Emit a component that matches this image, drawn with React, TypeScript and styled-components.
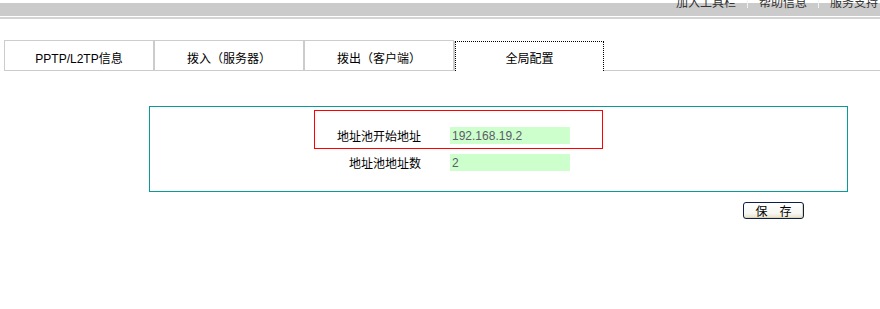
import React from "react";
import styled, { createGlobalStyle } from "styled-components";

const GlobalStyle = createGlobalStyle`
  html, body {
    margin: 0;
    padding: 0;
    background: #ffffff;
  }
  body {
    font-family: "Liberation Sans", "Noto Sans CJK SC", sans-serif;
    font-size: 12px;
    color: #000;
  }
`;

const TopBar = styled.div`
  height: 19px;
  display: flex;
  justify-content: flex-end;
  align-items: flex-start;
  overflow: hidden;
  background: linear-gradient(
    to bottom,
    #ffffff 0 3px,
    #cbcbcb 3px 16px,
    #ffffff 16px 17px,
    #d3d3d3 17px 19px
  );
`;

const TopLink = styled.span<{ $first?: boolean; $last?: boolean }>`
  margin-top: -4px;
  line-height: 12px;
  font-family: "Noto Sans CJK SC", sans-serif;
  font-size: 12px;
  color: #333;
  padding: 0 ${(p) => (p.$last ? "2px" : "11px")} 0 ${(p) => (p.$first ? "11px" : "11px")};
  border-left: 1px solid ${(p) => (p.$first ? "transparent" : "#eef4f4")};
`;

const TabBar = styled.div`
  display: flex;
  height: 31px;
  margin: 21px 0 0 4px;
`;

const Tab = styled.div<{ $active?: boolean }>`
  box-sizing: border-box;
  display: flex;
  align-items: center;
  justify-content: center;
  padding-top: 3px;
  font-size: 12px;
  color: #000;
  white-space: nowrap;
  width: ${(p) => (p.$active ? "149px" : "150px")};
  height: ${(p) => (p.$active ? "30px" : "31px")};
  margin-left: ${(p) => (p.$active ? "1px" : "0")};
  margin-top: ${(p) => (p.$active ? "1px" : "0")};
  border: ${(p) => (p.$active ? "1px dotted #000" : "1px solid #cccccc")};
  border-bottom: ${(p) => (p.$active ? "none" : "1px solid #cccccc")};
  box-shadow: ${(p) => (p.$active ? "-1px 0 0 #cccccc" : "none")};
  padding-bottom: ${(p) => (p.$active ? "1px" : "0")};
`;

const TabFiller = styled.div`
  flex: 1;
  border-bottom: 1px solid #cccccc;
`;

const Panel = styled.section`
  margin: 35px 32px 0 149px;
  border: 1px solid #0b9a9a;
  padding: 3px 0 19px 164px;
`;

const RowFrame = styled.div<{ $highlight?: boolean }>`
  box-sizing: border-box;
  width: 289px;
  border: 1px solid ${(p) => (p.$highlight ? "#ff0000" : "transparent")};
  padding: ${(p) => (p.$highlight ? "16px 0 4px" : "0")};
  margin-top: ${(p) => (p.$highlight ? "0" : "4px")};
`;

const FieldRow = styled.div`
  display: grid;
  grid-template-columns: 106px 120px;
  column-gap: 29px;
  align-items: center;
`;

const FieldLabel = styled.label`
  text-align: right;
  font-family: "Noto Sans CJK SC", sans-serif;
  font-size: 12px;
  line-height: 17px;
  color: #000;
  white-space: nowrap;
`;

const FieldInput = styled.input`
  box-sizing: border-box;
  width: 120px;
  height: 17px;
  border: none;
  outline: none;
  margin: 0;
  padding: 1px 0 0 2px;
  background: #ccffcc;
  font-family: "Liberation Sans", sans-serif;
  font-size: 12px;
  color: #5c5c6a;
`;

const Actions = styled.div`
  display: flex;
  justify-content: flex-end;
  margin: 10px 76px 0 0;
`;

const SaveButton = styled.button`
  box-sizing: border-box;
  width: 61px;
  height: 17px;
  padding: 0;
  margin: 0;
  border: 1px solid #0d1d4d;
  border-radius: 3px;
  background: linear-gradient(to bottom, #ffffff 0%, #f6f6f2 70%, #e6e2cc 100%);
  box-shadow: inset -1px -1px 0 #e2d8b0;
  font-family: "Noto Sans CJK SC", sans-serif;
  font-size: 12px;
  line-height: 15px;
  color: #000;
  cursor: pointer;
`;

const tabs = ["PPTP/L2TP信息", "拨入（服务器）", "拨出（客户端）", "全局配置"];

export default function App() {
  return (
    <>
      <GlobalStyle />
      <TopBar>
        <TopLink $first>加入工具栏</TopLink>
        <TopLink>帮助信息</TopLink>
        <TopLink $last>服务支持</TopLink>
      </TopBar>
      <TabBar>
        {tabs.map((t, i) => (
          <Tab key={t} $active={i === 3}>
            {t}
          </Tab>
        ))}
        <TabFiller />
      </TabBar>
      <Panel>
        <RowFrame $highlight>
          <FieldRow>
            <FieldLabel>地址池开始地址</FieldLabel>
            <FieldInput defaultValue="192.168.19.2" />
          </FieldRow>
        </RowFrame>
        <RowFrame>
          <FieldRow>
            <FieldLabel>地址池地址数</FieldLabel>
            <FieldInput defaultValue="2" />
          </FieldRow>
        </RowFrame>
      </Panel>
      <Actions>
        <SaveButton>保　存</SaveButton>
      </Actions>
    </>
  );
}
